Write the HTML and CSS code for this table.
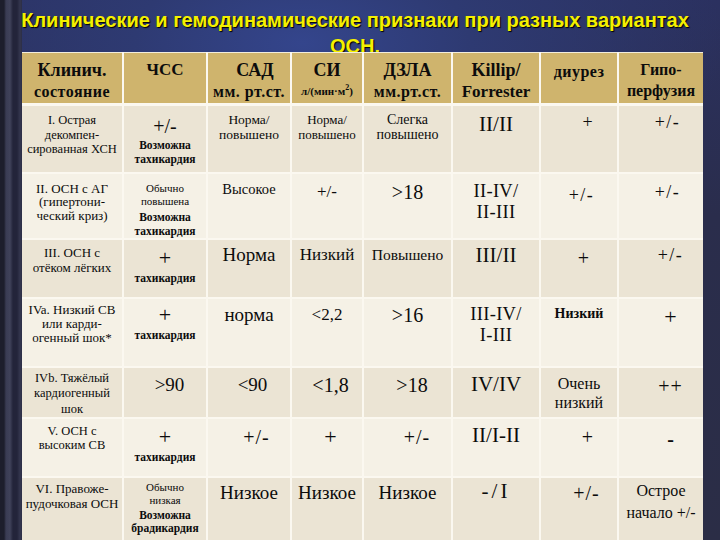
FILE: index.html
```html
<!DOCTYPE html>
<html lang="ru">
<head>
<meta charset="utf-8">
<link rel="stylesheet" href="styles.css">
</head>
<body>
<div class="slide">
  <div class="strip"></div>
  <div class="main">
    <h1 class="title">Клинические и гемодинамические признаки при разных вариантах<br>ОСН.</h1>
    <table class="grid">
      <colgroup>
        <col class="c1"><col class="c2"><col class="c3"><col class="c4"><col class="c5"><col class="c6"><col class="c7"><col class="c8">
      </colgroup>
      <thead>
        <tr class="rh">
          <th><div class="h18">Клинич.</div><div class="h16w">состояние</div></th>
          <th><div class="h17">ЧСС</div></th>
          <th><div class="h18 pl12">САД</div><div class="h16w">мм. рт.ст.</div></th>
          <th><div class="h18">СИ</div><div class="h11">л/(мин·м<sup>2</sup>)</div></th>
          <th><div class="h18">ДЗЛА</div><div class="h16w">мм.рт.ст.</div></th>
          <th><div class="h18">Killip/</div><div class="h17">Forrester</div></th>
          <th><div class="h16w top1">диурез</div></th>
          <th><div class="h16">Гипо-</div><div class="h16">перфузия</div></th>
        </tr>
      </thead>
      <tbody>
        <tr class="r1 dark">
          <td class="pt7"><div class="s125">I. Острая<br>декомпен-<br>сированная ХСН</div></td>
          <td class="pt10"><div class="xl">+/-</div><div class="b">Возможна<br>тахикардия</div></td>
          <td class="pt6"><div class="s135">Норма/<br>повышено</div></td>
          <td class="pt6"><div class="s13">Норма/<br>повышено</div></td>
          <td class="pt6"><div class="s14">Слегка<br>повышено</div></td>
          <td class="pt8"><div class="rn">II/II</div></td>
          <td class="pt6 pl18"><div class="l18">+</div></td>
          <td class="pt6 pl14"><div class="pm">+/-</div></td>
        </tr>
        <tr class="r2 light">
          <td class="pt8"><div class="s13 lh135">II. ОСН с АГ<br>(гипертони-<br>ческий криз)</div></td>
          <td class="pt8"><div class="xs">Обычно<br>повышена</div><div class="b">Возможна<br>тахикардия</div></td>
          <td class="pt7"><div class="m145">Высокое</div></td>
          <td class="pt8"><div class="l17">+/-</div></td>
          <td class="pt8"><div class="l20">&gt;18</div></td>
          <td class="pt7"><div class="rn2">II-IV/<br>II-III</div></td>
          <td class="pt11 pl6"><div class="pm">+/-</div></td>
          <td class="pt8 pl14"><div class="pm">+/-</div></td>
        </tr>
        <tr class="r3 dark">
          <td class="pt5"><div class="s13 lh15">III. ОСН с<br>отёком лёгких</div></td>
          <td class="pt7"><div class="xl22">+</div><div class="b">тахикардия</div></td>
          <td class="pt5"><div class="l19">Норма</div></td>
          <td class="pt5"><div class="l17">Низкий</div></td>
          <td class="pt5"><div class="m155">Повышено</div></td>
          <td class="pt5"><div class="rn">III/II</div></td>
          <td class="pt8 pl10"><div class="xl">+</div></td>
          <td class="pt5 pl20"><div class="pm">+/-</div></td>
        </tr>
        <tr class="r4 light">
          <td class="pt4"><div class="s13 lh14">IVa. Низкий СВ<br>или карди-<br>огенный шок*</div></td>
          <td class="pt5"><div class="xl22">+</div><div class="b">тахикардия</div></td>
          <td class="pt6"><div class="l19">норма</div></td>
          <td class="pt6"><div class="l17">&lt;2,2</div></td>
          <td class="pt6"><div class="l20">&gt;16</div></td>
          <td class="pt5"><div class="rn2">III-IV/<br>I-III</div></td>
          <td class="pt7"><div class="m14b">Низкий</div></td>
          <td class="pt7 pl20"><div class="xl22">+</div></td>
        </tr>
        <tr class="r5 dark">
          <td class="pt3"><div class="s125 lh155">IVb. Тяжёлый<br>кардиогенный<br>шок</div></td>
          <td class="pt7 pl10"><div class="l19">&gt;90</div></td>
          <td class="pt7 pl8"><div class="l19">&lt;90</div></td>
          <td class="pt7 pl8"><div class="l20">&lt;1,8</div></td>
          <td class="pt7 pl10"><div class="l20">&gt;18</div></td>
          <td class="pt6"><div class="rn">IV/IV</div></td>
          <td class="pt6"><div class="m16 lh19">Очень<br>низкий</div></td>
          <td class="pt8 pl20"><div class="pm20">++</div></td>
        </tr>
        <tr class="r6 light">
          <td class="pt6"><div class="s125 lh135">V. ОСН с<br>высоким СВ</div></td>
          <td class="pt7"><div class="xl22">+</div><div class="b">тахикардия</div></td>
          <td class="pt8 pl16"><div class="pm20">+/-</div></td>
          <td class="pt7 pl8"><div class="xl22">+</div></td>
          <td class="pt8 pl20"><div class="pm20">+/-</div></td>
          <td class="pt6"><div class="rn">II/I-II</div></td>
          <td class="pt8 pl18"><div class="xl">+</div></td>
          <td class="pt10 pl20"><div class="xl bold">-</div></td>
        </tr>
        <tr class="r7 dark">
          <td class="pt3"><div class="s13 lh15">VI. Правоже-<br>пудочковая ОСН</div></td>
          <td class="pt3"><div class="xs">Обычно<br>низкая</div><div class="b lh13">Возможна<br>брадикардия</div></td>
          <td class="pt4"><div class="l19 lh22">Низкое</div></td>
          <td class="pt4"><div class="l19 lh22">Низкое</div></td>
          <td class="pt4"><div class="l19 lh22">Низкое</div></td>
          <td class="pt3"><div class="rn sp3">-/I</div></td>
          <td class="pt5 pl16"><div class="pm20">+/-</div></td>
          <td class="pt2"><div class="m16 lh22">Острое<br>начало +/-</div></td>
        </tr>
      </tbody>
    </table>
  </div>
</div>
</body>
</html>
```
FILE: styles.css
```css
html, body {
  margin: 0;
  padding: 0;
}
body {
  width: 720px;
  height: 540px;
  overflow: hidden;
  background: #2a2d48;
}
.slide {
  display: flex;
  width: 720px;
  height: 540px;
  overflow: hidden;
  background:
    radial-gradient(ellipse 420px 220px at 42% 8%, #34458c 0%, #2e3a72 40%, rgba(42,45,72,0) 100%),
    linear-gradient(180deg, #2b3160 0%, #2a2d4c 40%, #2b2d46 100%);
}
.strip {
  flex: 0 0 22px;
  background: linear-gradient(90deg, #1d1e2c 0px, #1d1e2c 4px, #3a3c54 6px, #40425a 10px, #23243a 13px, #23243a 17px, #34364e 20px, #2c2e46 22px);
}
.main {
  flex: 0 0 681px;
  display: flex;
  flex-direction: column;
}
.title {
  flex: 0 0 52px;
  margin: 0 0 0 -22px;
  height: 52px;
  padding: 7px 10px 0 0;
  box-sizing: border-box;
  width: 720px;
  text-align: center;
  font-family: "Liberation Sans", Arial, sans-serif;
  font-weight: bold;
  font-size: 20px;
  line-height: 26px;
  color: #f4f000;
  text-shadow: 1px 1px 1px #000;
  white-space: nowrap;
}
.grid {
  flex: 0 0 auto;
  position: relative;
  z-index: 1;
  width: 681px;
  table-layout: fixed;
  border-collapse: collapse;
  color: #0c0c0c;
  border-top: 1px solid #f2eddd;
}
.grid th, .grid td {
  font-family: "Liberation Serif", "DejaVu Serif", "Times New Roman", serif;
}
.c1 { width: 101px; }
.c2 { width: 84px; }
.c3 { width: 84px; }
.c4 { width: 72px; }
.c5 { width: 89px; }
.c6 { width: 88px; }
.c7 { width: 78px; }
.c8 { width: 85px; }
th, td {
  vertical-align: top;
  text-align: center;
  padding: 0 1px;
  border: 2px solid #fbf8f0;
  border-top: 0;
  overflow: hidden;
  white-space: nowrap;
}
th {
  background: #cfb46d;
  padding-top: 6px;
  border-bottom: 3px solid #fbf8f0;
  font-weight: bold;
}
tr.rh { height: 49px; }
tr.r1 { height: 68px; }
tr.r2 { height: 66px; }
tr.r3 { height: 59px; }
tr.r4 { height: 69px; }
tr.r5 { height: 50px; }
tr.r6 { height: 59px; }
tr.r7 { height: 80px; }
tr.dark td { background: #ebe4d4; }
tr.light td { background: #f5f1e6; }
th:first-child, td:first-child { border-left: 0; }
th:last-child, td:last-child { border-right: 0; }

.h18 { font-size: 18px; line-height: 22px; }
.h17 { font-size: 17px; line-height: 22px; }
.h16 { font-size: 16px; line-height: 21px; }
.h16w { font-size: 16px; line-height: 21px; letter-spacing: 0.5px; }
.h11 { font-size: 11px; line-height: 20px; }
.h11 sup { font-size: 8px; line-height: 0; }
.top1 { margin-top: 2px; }

.s125 { font-size: 12.5px; line-height: 14.5px; }
.s13 { font-size: 13px; line-height: 15px; }
.s135 { font-size: 13.5px; line-height: 15px; }
.s14 { font-size: 14px; line-height: 15px; }
.xs { font-size: 11px; line-height: 13px; }
.b { font-size: 11.5px; line-height: 14px; font-weight: bold; margin-top: 2px; }
.m14b { font-size: 14px; line-height: 16px; font-weight: bold; }
.m145 { font-size: 14.5px; line-height: 16px; }
.m155 { font-size: 15.5px; line-height: 20px; }
.m16 { font-size: 16px; line-height: 19px; }
.l17 { font-size: 17px; line-height: 20px; }
.l18 { font-size: 18px; line-height: 20px; }
.l19 { font-size: 19px; line-height: 20px; }
.l20 { font-size: 20px; line-height: 20px; }
.rn { font-size: 21px; line-height: 20px; }
.rn2 { font-size: 18.5px; line-height: 21.5px; letter-spacing: 0.3px; }
.pm { font-size: 18px; line-height: 20px; letter-spacing: 1.5px; }
.pm20 { font-size: 20px; line-height: 20px; letter-spacing: 1px; }
.xl { font-size: 20px; line-height: 20px; }
.xl22 { font-size: 22px; line-height: 22px; }
.bold { font-weight: bold; }
.sp3 { letter-spacing: 3px; }
.lh13 { line-height: 13px; }
.lh135 { line-height: 13.5px; }
.lh14 { line-height: 14px; }
.lh15 { line-height: 15px; }
.lh155 { line-height: 15.5px; }
.lh19 { line-height: 19px; }
.lh22 { line-height: 22px; }

.pt2 { padding-top: 2px; }
.pt3 { padding-top: 3px; }
.pt4 { padding-top: 4px; }
.pt5 { padding-top: 5px; }
.pt6 { padding-top: 6px; }
.pt7 { padding-top: 7px; }
.pt8 { padding-top: 8px; }
.pt10 { padding-top: 10px; }
.pt11 { padding-top: 11px; }
.pl6 { padding-left: 6px; }
.pl8 { padding-left: 8px; }
.pl10 { padding-left: 10px; }
.pl12 { padding-left: 12px; }
.pl14 { padding-left: 14px; }
.pl16 { padding-left: 16px; }
.pl18 { padding-left: 18px; }
.pl20 { padding-left: 20px; }
```
